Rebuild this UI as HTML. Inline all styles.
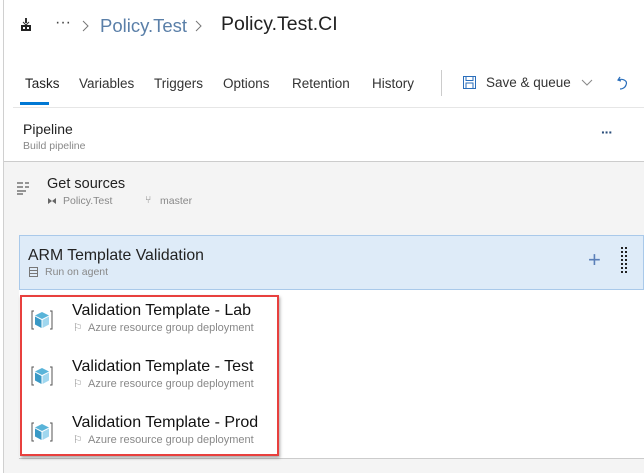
<!DOCTYPE html>
<html><head><meta charset="utf-8"><style>
*{margin:0;padding:0;box-sizing:border-box}
body{width:644px;height:473px;overflow:hidden;background:#fff;font-family:"Segoe UI","Liberation Sans",sans-serif;position:relative;color:#212121}
.a{position:absolute;white-space:nowrap}
.sub{font-size:10.5px;color:#888}
.task{font-size:16px;color:#111}
</style></head><body>
<div class="a" style="left:3px;top:0;width:1px;height:473px;background:#d0d0d0"></div>
<svg class="a" style="left:20px;top:18px" width="12" height="14" viewBox="0 0 12 14"><rect x="5" y="0" width="2" height="5" fill="#333"/><path d="M3 4 L6 7 L9 4" fill="none" stroke="#333"/><rect x="1" y="7" width="10" height="6" fill="#222"/><rect x="3" y="9" width="2" height="2" fill="#fff"/><rect x="7" y="9" width="2" height="2" fill="#fff"/></svg>
<div class="a" style="left:55px;top:14px;font-size:16px;color:#444">···</div>
<svg class="a" style="left:82px;top:20px" width="7" height="12"><path d="M1 1 L6 6 L1 11" fill="none" stroke="#777"/></svg>
<div class="a" style="left:100px;top:15px;font-size:18.5px;color:#5a7fa8">Policy.Test</div>
<svg class="a" style="left:195px;top:20px" width="7" height="12"><path d="M1 1 L6 6 L1 11" fill="none" stroke="#777"/></svg>
<div class="a" style="left:221px;top:13px;font-size:19.5px;color:#222">Policy.Test.CI</div>
<div class="a" style="left:25px;top:76px;font-size:13.5px;color:#222">Tasks</div>
<div class="a" style="left:20px;top:102px;width:29px;height:3px;background:#0078d4"></div>
<div class="a" style="left:79px;top:76px;font-size:13.5px;color:#333">Variables</div>
<div class="a" style="left:154px;top:76px;font-size:13.5px;color:#333">Triggers</div>
<div class="a" style="left:223px;top:76px;font-size:13.5px;color:#333">Options</div>
<div class="a" style="left:292px;top:76px;font-size:13.5px;color:#333">Retention</div>
<div class="a" style="left:372px;top:76px;font-size:13.5px;color:#333">History</div>
<div class="a" style="left:441px;top:70px;width:1px;height:26px;background:#ccc"></div>
<svg class="a" style="left:463px;top:76px" width="13" height="13" viewBox="0 0 13 13"><rect x="0.5" y="0.5" width="12" height="12" fill="none" stroke="#2a6ebb"/><rect x="3" y="0.5" width="7" height="4" fill="none" stroke="#2a6ebb"/><rect x="3" y="7" width="7" height="5.5" fill="none" stroke="#2a6ebb"/></svg>
<div class="a" style="left:486px;top:75px;font-size:13.5px;color:#333">Save &amp; queue</div>
<svg class="a" style="left:581px;top:79px" width="12" height="8"><path d="M1 1 L6 6 L11 1" fill="none" stroke="#888"/></svg>
<svg class="a" style="left:617px;top:75px" width="12" height="16"><path d="M3 2 L1 5 L4 6 M1 5 C6 3 11 6 9 10 C8 13 5 14 3 14" fill="none" stroke="#2a6ebb" stroke-width="1.2"/></svg>
<div class="a" style="left:13px;top:107px;width:631px;height:1px;background:#e6e6e6"></div>
<div class="a" style="left:23px;top:121px;font-size:14px;color:#222">Pipeline</div>
<div class="a sub" style="left:23px;top:140px">Build pipeline</div>
<div class="a" style="left:601px;top:124px;font-size:14px;font-weight:bold;color:#2a4d7a;letter-spacing:-1px">···</div>
<div class="a" style="left:4px;top:161px;width:640px;height:312px;background:#f4f4f4;border-top:1px solid #ccc"></div>
<svg class="a" style="left:16px;top:181px" width="14" height="14"><path d="M1 2h6M9 2h4M1 6h6M9 6h4M1 10h9M1 13h6" stroke="#333" stroke-width="1"/></svg>
<div class="a" style="left:47px;top:176px;font-size:14.5px;color:#222">Get sources</div>
<svg class="a" style="left:47px;top:196px" width="10" height="10"><path d="M1 2 L9 8 V2 L1 8Z" fill="#666"/></svg>
<div class="a sub" style="left:63px;top:195px">Policy.Test</div>
<div class="a sub" style="left:145px;top:194px">⑂</div>
<div class="a sub" style="left:160px;top:195px">master</div>
<div class="a" style="left:19px;top:235px;width:625px;height:55px;background:#deebf8;border:1px solid #a9c9ea"></div>
<div class="a" style="left:28px;top:247px;font-size:15.8px;color:#222">ARM Template Validation</div>
<svg class="a" style="left:29px;top:267px" width="9" height="10"><rect x="0.5" y="0.5" width="8" height="9" fill="none" stroke="#777"/><path d="M1 3.5h7M1 6.5h7" stroke="#777"/></svg>
<div class="a sub" style="left:45px;top:266px">Run on agent</div>
<div class="a" style="left:588px;top:247px;font-size:22px;color:#5a7fb8;font-weight:300">+</div>
<svg class="a" style="left:621px;top:247px" width="8" height="28"><g fill="#222"><rect x="0" y="0" width="2" height="2"/><rect x="4" y="0" width="2" height="2"/><rect x="0" y="4" width="2" height="2"/><rect x="4" y="4" width="2" height="2"/><rect x="0" y="8" width="2" height="2"/><rect x="4" y="8" width="2" height="2"/><rect x="0" y="12" width="2" height="2"/><rect x="4" y="12" width="2" height="2"/><rect x="0" y="16" width="2" height="2"/><rect x="4" y="16" width="2" height="2"/><rect x="0" y="20" width="2" height="2"/><rect x="4" y="20" width="2" height="2"/><rect x="0" y="24" width="2" height="2"/><rect x="4" y="24" width="2" height="2"/></g></svg>
<div class="a" style="left:19px;top:290px;width:625px;height:169px;background:#fff;border-bottom:1px solid #ccc"></div>
<div class="a" style="left:20px;top:295px;width:259px;height:161px;border:2px solid #e8403e;box-shadow:1px 2px 3px rgba(0,0,0,.35)"></div>

<svg class="a" style="left:31px;top:309px" width="22" height="22" viewBox="0 0 22 22"><path d="M3 2 L1 2 L1 20 L3 20 M19 2 L21 2 L21 20 L19 20" fill="none" stroke="#555"/><path d="M11 3 L18 6.5 L11 10 L4 6.5Z" fill="#59b4d9"/><path d="M4 7.5 L10.5 11 L10.5 19 L4 15.5Z" fill="#3999c6"/><path d="M18 7.5 L11.5 11 L11.5 19 L18 15.5Z" fill="#a0d7ef"/></svg>
<div class="a task" style="left:72px;top:302px">Validation Template - Lab</div>
<div class="a sub" style="left:73px;top:322px">⚐</div><div class="a sub" style="left:88px;top:322px;font-size:11px">Azure resource group deployment</div>
<svg class="a" style="left:31px;top:365px" width="22" height="22" viewBox="0 0 22 22"><path d="M3 2 L1 2 L1 20 L3 20 M19 2 L21 2 L21 20 L19 20" fill="none" stroke="#555"/><path d="M11 3 L18 6.5 L11 10 L4 6.5Z" fill="#59b4d9"/><path d="M4 7.5 L10.5 11 L10.5 19 L4 15.5Z" fill="#3999c6"/><path d="M18 7.5 L11.5 11 L11.5 19 L18 15.5Z" fill="#a0d7ef"/></svg>
<div class="a task" style="left:72px;top:358px">Validation Template - Test</div>
<div class="a sub" style="left:73px;top:378px">⚐</div><div class="a sub" style="left:88px;top:378px;font-size:11px">Azure resource group deployment</div>
<svg class="a" style="left:31px;top:421px" width="22" height="22" viewBox="0 0 22 22"><path d="M3 2 L1 2 L1 20 L3 20 M19 2 L21 2 L21 20 L19 20" fill="none" stroke="#555"/><path d="M11 3 L18 6.5 L11 10 L4 6.5Z" fill="#59b4d9"/><path d="M4 7.5 L10.5 11 L10.5 19 L4 15.5Z" fill="#3999c6"/><path d="M18 7.5 L11.5 11 L11.5 19 L18 15.5Z" fill="#a0d7ef"/></svg>
<div class="a task" style="left:72px;top:414px">Validation Template - Prod</div>
<div class="a sub" style="left:73px;top:434px">⚐</div><div class="a sub" style="left:88px;top:434px;font-size:11px">Azure resource group deployment</div>
</body></html>
